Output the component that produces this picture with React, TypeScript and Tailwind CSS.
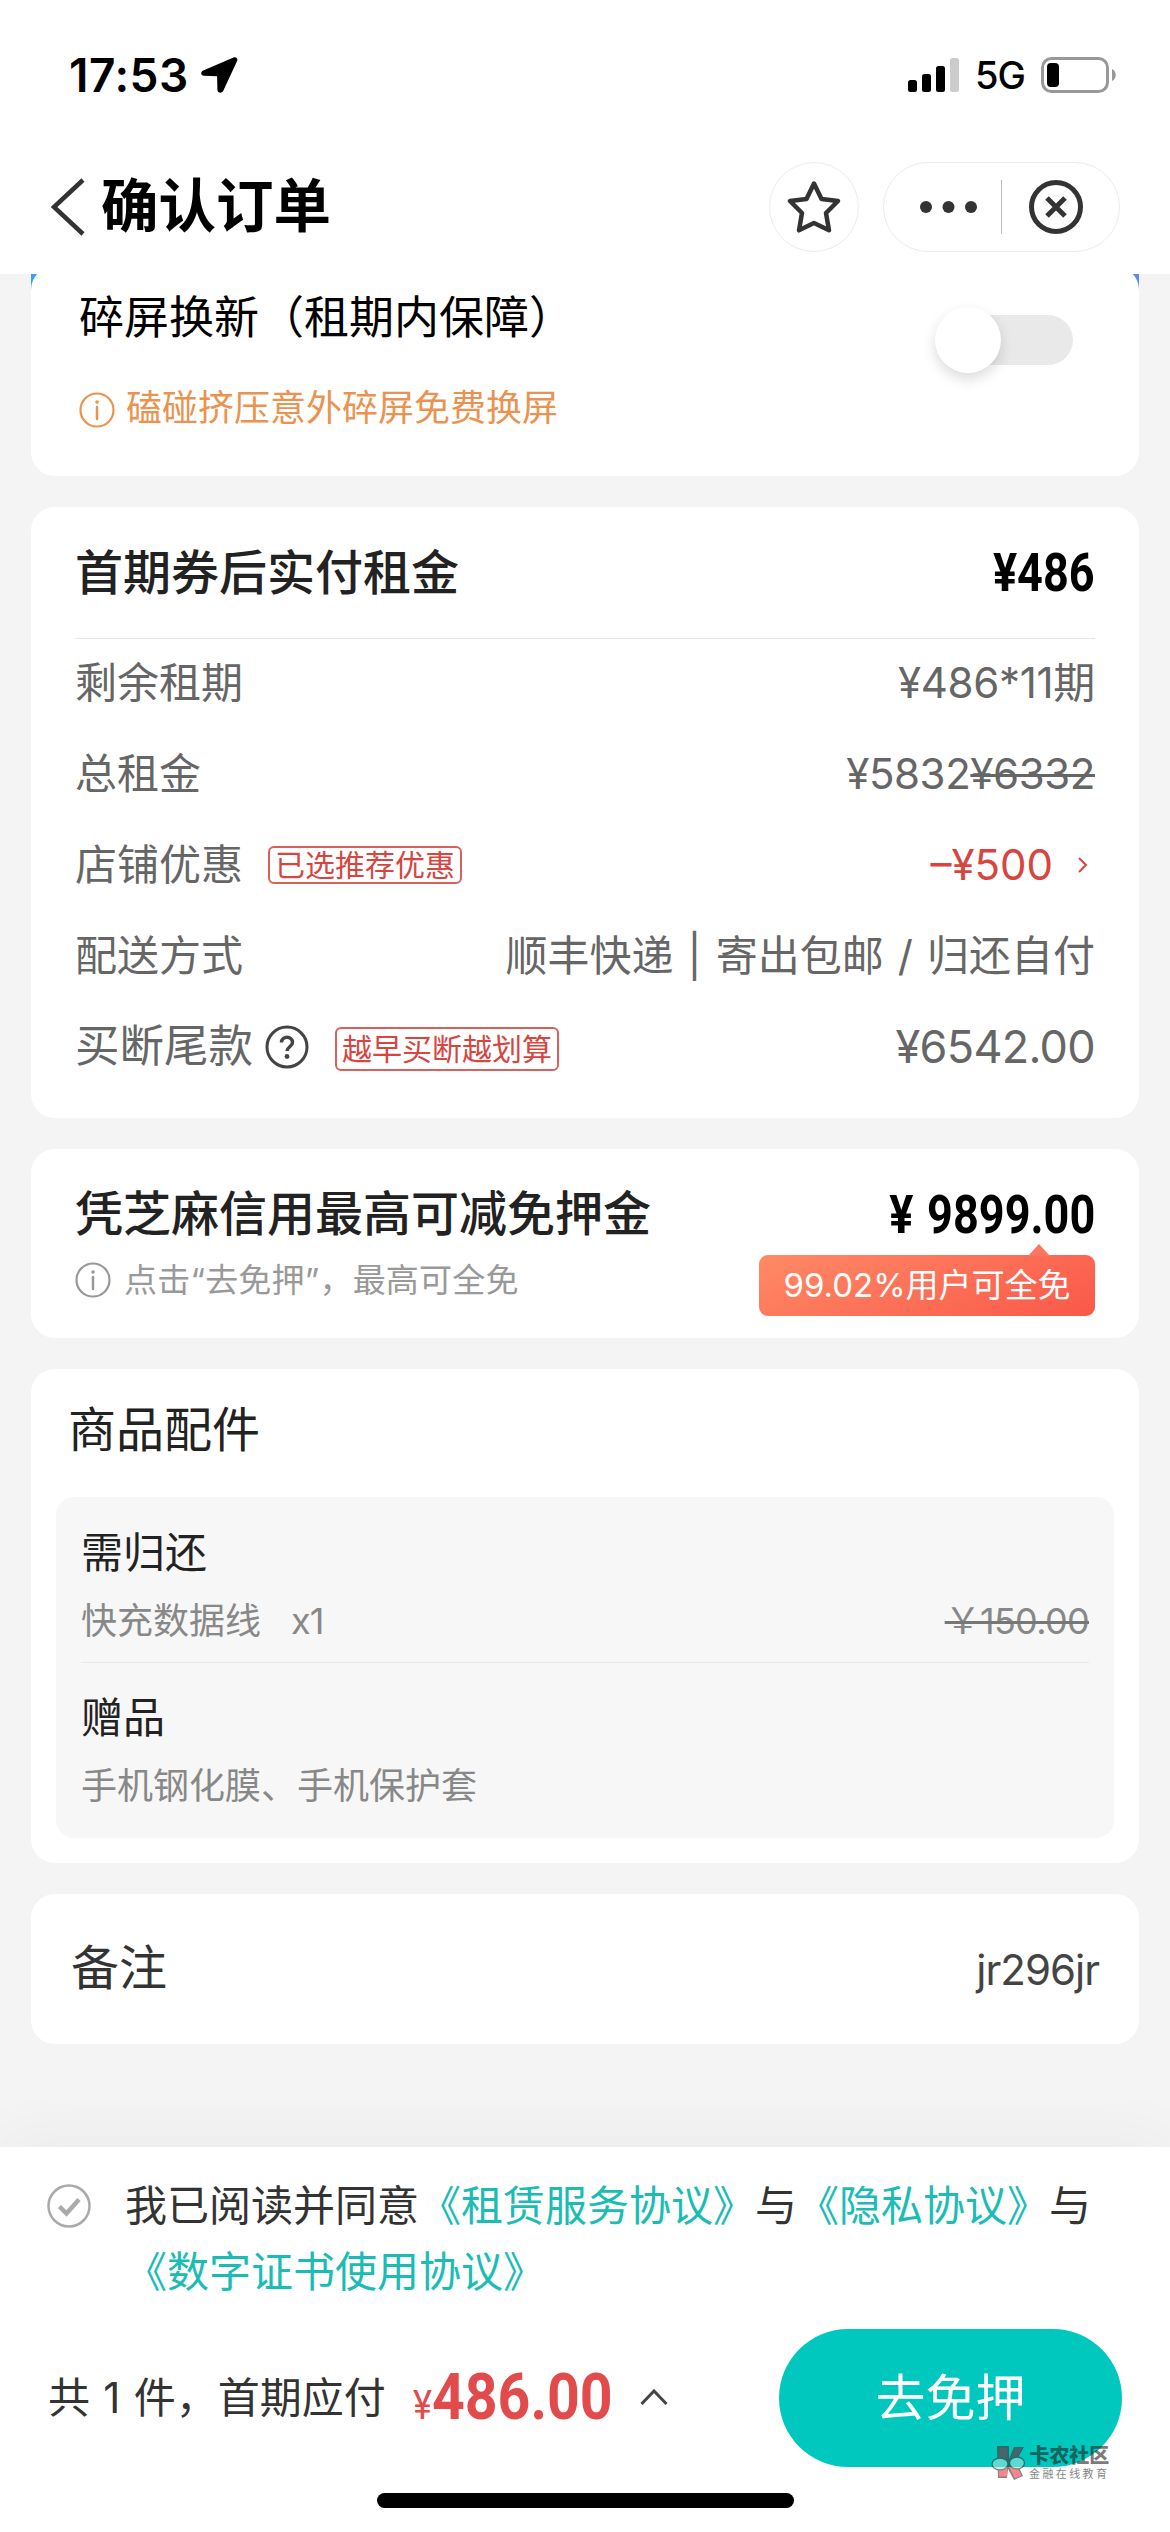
import React, { useState } from 'react';

interface InfoRowProps {
  label: React.ReactNode;
  children: React.ReactNode;
}

const StatusBar = () => (
  <div className="flex h-[150px] items-center justify-between pl-[69px] pr-[53px]">
    <div className="flex items-center">
      <span className="w-[132px] text-[46px] font-semibold leading-none tracking-[0.500px] text-black">17:53</span>
      <svg className="h-[36px] w-[37px]" viewBox="0 0 37 36" fill="#000">
        <path d="M32.500.6 2.200 13.600C-.8 14.900-.3 18.700 2.900 18.800l13.200.4.3 13.200c.1 4 4.600 4.300 6 1.200L36 4.200C37.200 1.600 35.200-.5 32.500.6Z" />
      </svg>
    </div>
    <div className="flex items-center">
      <svg className="h-[34px] w-[52px]" viewBox="0 0 52 34">
        <rect x="0" y="22" width="9" height="12" rx="2.500" />
        <rect x="14" y="16" width="9" height="18" rx="2.500" />
        <rect x="28" y="8" width="9" height="26" rx="2.500" />
        <rect x="42" y="0" width="9" height="34" rx="2.500" fill="#ccc" />
      </svg>
      <span className="ml-[15px] w-[66px] text-[38px] font-medium leading-none tracking-[-1px] text-black">5G</span>
      <svg className="h-9 w-[76px]" viewBox="0 0 76 36">
        <rect x="1.500" y="1.500" width="65" height="33" rx="9" fill="none" stroke="#999" strokeWidth="3" />
        <rect x="6" y="6" width="12" height="24" rx="4" />
        <path d="M71 12c5 2 5 10 0 12Z" fill="#999" />
      </svg>
    </div>
  </div>
);

const NavBar = () => (
  <div className="flex h-[124px] items-start justify-between pl-[50px] pr-[50px] pt-3">
    <div className="flex h-[90px] items-center">
      <svg className="h-[58px] w-[36px]" viewBox="0 0 36 58" fill="none" stroke="#333" strokeWidth="4.500">
        <path d="M33 2 4 29l29 27" />
      </svg>
      <h1 className="ml-[15px] text-[57.500px] font-bold leading-none text-black">确认订单</h1>
    </div>
    <div className="flex items-center gap-6">
      <button className="flex h-[90px] w-[90px] items-center justify-center rounded-full border border-[#ececec]">
        <svg className="h-[54px] w-[54px]" viewBox="0 0 54 54" fill="none" stroke="#333" strokeWidth="4.500" strokeLinejoin="round">
          <path d="m27 3.500 7.500 15.500L51 21 39 33l3 17.300L27 43l-15 7.300L15 33 3 21l16.500-2Z" />
        </svg>
      </button>
      <div className="flex h-[90px] w-[237px] items-center rounded-full border border-[#ececec] pl-[36px]">
        <svg className="h-3 w-[58px]" viewBox="0 0 58 12" fill="#333">
          <circle cx="6" cy="6" r="6" />
          <circle cx="28.500" cy="6" r="6" />
          <circle cx="51" cy="6" r="6" />
        </svg>
        <div className="ml-[23px] h-[54px] w-px bg-[#bbb]" />
        <svg className="ml-[27px] h-[54px] w-[54px]" viewBox="0 0 54 54" fill="none" stroke="#333" strokeWidth="5">
          <circle cx="27" cy="27" r="24.500" />
          <path d="m18 18 18 18M36 18 18 36" />
        </svg>
      </div>
    </div>
  </div>
);

const InfoIcon = () => (
  <svg className="h-[36px] w-[36px] shrink-0" viewBox="0 0 36 36" fill="none" stroke="currentColor" strokeWidth="2.200">
    <circle cx="18" cy="18" r="16.500" />
    <path d="M18 15v12" strokeWidth="2.500" strokeLinecap="round" />
    <circle cx="18" cy="10" r="1.800" fill="currentColor" stroke="none" />
  </svg>
);

const InfoRow = ({ label, children }: InfoRowProps) => (
  <div className="flex h-[91px] items-center justify-between">
    <div className="flex items-center">{label}</div>
    <div className="flex items-center">{children}</div>
  </div>
);

const Watermark = () => (
  <div className="absolute bottom-[-14px] right-[13px] flex w-[118px] items-center opacity-60">
    <svg className="h-9 w-[36px] shrink-0" viewBox="0 0 36 36">
      <path d="M6 1h12v13L23 2h10l-8 14 7 15-9 4-6-11-1 9H7Z" fill="#333" />
      <path d="M7.500 2.500h9v11h-9ZM24 3h7l-6 11h-6Z" fill="#7a2530" />
      <path d="M8 21h8v10.500H8ZM18 22h8l4.500 8.500-6.500 3Z" fill="#fb3346" />
      <ellipse cx="9" cy="19" rx="8" ry="6" fill="#9fe3df" stroke="#333" strokeWidth="1.300" />
      <ellipse cx="26" cy="18" rx="7.500" ry="6" fill="#9fe3df" stroke="#333" strokeWidth="1.300" />
    </svg>
    <div className="ml-0.5 flex flex-col gap-[2px] whitespace-nowrap">
      <span className="text-[20px] font-black leading-[20px] text-[#222]">卡农社区</span>
      <span className="text-[11px] leading-[12px] tracking-[2.400px] text-[#333]">金融在线教育</span>
    </div>
  </div>
);

export default function App() {
  const [insured, setInsured] = useState(false);

  return (
    <div className="flex h-[2532px] w-[1170px] flex-col overflow-hidden bg-[#f4f4f4] font-['Inter','Noto_Sans_CJK_SC',sans-serif]">
      <header className="shrink-0 bg-white">
        <StatusBar />
        <NavBar />
      </header>

      <main className="flex flex-1 flex-col gap-[31px] overflow-hidden px-[31px]">
        {/* screen insurance */}
        <section className="h-[202px] shrink-0 rounded-b-[24px] bg-[linear-gradient(90deg,#36a3f0,#5b8af2)] bg-[length:100%_16px] bg-no-repeat">
          <div className="-mt-2 flex h-[210px] justify-between rounded-[24px] bg-white pl-[48px] pr-[66px]">
            <div>
              <h2 className="mt-[21px] text-[45px] leading-[62px] text-black">碎屏换新（租期内保障）</h2>
              <div className="mt-[33px] flex items-center gap-[11px] text-[#ea9350]">
                <span className="pt-1"><InfoIcon /></span>
                <p className="text-[36px] leading-[52px]">磕碰挤压意外碎屏免费换屏</p>
              </div>
            </div>
            <button
              onClick={() => setInsured(!insured)}
              className={`mt-[49px] flex h-[50px] w-[132px] items-center rounded-full ${insured ? 'justify-end bg-[#00c8be]' : 'bg-[#e9e9e9]'}`}
            >
              <span className="-ml-1.5 h-[66px] w-[66px] shrink-0 rounded-full bg-white shadow-[0_6px_14px_rgba(0,0,0,0.14)]" />
            </button>
          </div>
        </section>

        {/* rent */}
        <section className="h-[611px] shrink-0 rounded-[24px] bg-white px-[44px] text-[42px] text-[#666]">
          <div className="flex h-[132px] items-center justify-between border-b border-[#e8e8e8]">
            <h2 className="text-[48px] font-medium text-[#222]">首期券后实付租金</h2>
            <span className="origin-right scale-x-[0.85] pt-[2px] font-['Roboto'] text-[53px] font-bold leading-none text-black">¥486</span>
          </div>
          <div className="-mt-[2px]">
            <InfoRow label="剩余租期">
              <span className="tracking-[-0.300px]">¥486*11期</span>
            </InfoRow>
            <InfoRow label="总租金">
              <span className="tracking-[-0.400px]">¥5832<s className="decoration-[3px]">¥6332</s></span>
            </InfoRow>
            <InfoRow
              label={
                <>
                  店铺优惠
                  <span className="ml-[25px] flex h-[38px] items-center rounded-md border-2 border-[#d9605b] px-[5px] text-[30px] leading-none text-[#d8453f]">已选推荐优惠</span>
                </>
              }
            >
              <span className="text-[#d8453f]">–¥500</span>
              <svg className="ml-[25px] mr-[7px] h-4 w-[10px]" viewBox="0 0 10 16" fill="none" stroke="#d8453f" strokeWidth="2">
                <path d="m1 1 7 7-7 7" />
              </svg>
            </InfoRow>
            <InfoRow label="配送方式">
              <span className="[word-spacing:2.300px]">顺丰快递 | 寄出包邮 / 归还自付</span>
            </InfoRow>
            <InfoRow
              label={
                <>
                  <span className="text-[44.500px]">买断尾款</span>
                  <svg className="ml-[12px] h-11 w-11" viewBox="0 0 44 44" fill="none" stroke="#444" strokeWidth="3">
                    <circle cx="22" cy="22" r="20" />
                    <path d="M16.500 17.500c0-7 11-7 11 0 0 4-5.500 4.500-5.500 8.500" strokeWidth="3.500" />
                    <circle cx="22" cy="31.500" r="2.400" fill="#444" stroke="none" />
                  </svg>
                  <span className="ml-[26px] mt-1 flex h-[44px] items-center rounded-md border-2 border-[#d9605b] px-[5px] text-[30px] leading-none text-[#d8453f]">越早买断越划算</span>
                </>
              }
            >
              <span className="text-[45px] tracking-[-0.700px]">¥6542.00</span>
            </InfoRow>
          </div>
        </section>

        {/* deposit */}
        <section className="h-[189px] shrink-0 rounded-[24px] bg-white px-[44px] pt-[33px]">
          <div className="flex h-[64px] items-center justify-between">
            <h2 className="text-[48px] font-medium text-[#222]">凭芝麻信用最高可减免押金</h2>
            <span className="flex origin-right scale-x-[0.85] items-center pt-[2px] font-['Roboto','Noto_Sans_CJK_SC'] text-[53px] font-bold leading-none text-black">
              ¥<span className="ml-4">9899.00</span>
            </span>
          </div>
          <div className="flex justify-between">
            <div className="flex h-[68px] items-center gap-[13px] text-[#999]">
              <InfoIcon />
              <p className="pt-px text-[33px] tracking-[0.200px]">点击“去免押”，最高可全免</p>
            </div>
            <div className="relative mt-[9px] flex h-[61px] w-[336px] items-center justify-center rounded-[9px] bg-[linear-gradient(155deg,#ff8a66,#fa5849)] text-[33px] text-white">
              99.02%用户可全免
              <svg className="absolute right-[45px] top-[-11px] h-3 w-[22px]" viewBox="0 0 22 12" fill="#fc7560">
                <path d="M11 0 22 12H0Z" />
              </svg>
            </div>
          </div>
        </section>

        {/* accessories */}
        <section className="h-[494px] shrink-0 rounded-[24px] bg-white px-[25px]">
          <h2 className="pl-[12px] pt-[29px] text-[48px] leading-[64px] text-[#222]">商品配件</h2>
          <div className="mt-[35px] h-[341px] rounded-[18px] bg-[#f7f7f7] px-[25px] pt-[24px] text-[36px] text-[#888]">
            <h3 className="text-[42px] leading-[64px] text-[#222]">需归还</h3>
            <div className="flex h-[78px] items-start justify-between border-b border-[#e8e8e8] pt-[10px] leading-[52px]">
              <span>快充数据线<span className="ml-[30px] tracking-[-1px]">x1</span></span>
              <s className="tracking-[-0.700px] decoration-[#777] decoration-[3px]">￥150.00</s>
            </div>
            <h3 className="mt-[23px] text-[42px] leading-[64px] text-[#222]">赠品</h3>
            <p className="mt-[10px] leading-[52px]">手机钢化膜、手机保护套</p>
          </div>
        </section>

        {/* remark */}
        <section className="flex h-[150px] shrink-0 items-center justify-between rounded-[24px] bg-white px-[40px]">
          <h2 className="pb-[3px] text-[48px] text-[#333]">备注</h2>
          <span className="pt-px text-[42px] tracking-[-1px] text-[#444]">jr296jr</span>
        </section>
      </main>

      <footer className="flex h-[385px] shrink-0 flex-col bg-white shadow-[0_-10px_60px_rgba(20,20,60,0.04)]">
        <div className="flex px-[47px] pt-[26px]">
          <svg className="mt-[11px] h-11 w-11 shrink-0" viewBox="0 0 44 44" fill="none" stroke="#aaa" strokeWidth="2.500">
            <circle cx="22" cy="22" r="20.500" />
            <path d="m12.500 22.500 7 7 12.500-14" strokeWidth="4.500" />
          </svg>
          <p className="ml-[34px] text-[42px] leading-[66px] text-[#333]">
            我已阅读并同意<span className="text-[#1bbcb4]">《租赁服务协议》</span>与<span className="text-[#1bbcb4]">《隐私协议》</span>与
            <br />
            <span className="text-[#1bbcb4]">《数字证书使用协议》</span>
          </p>
        </div>
        <div className="mt-6 flex h-[138px] items-center justify-between pl-[48px] pr-[48px]">
          <div className="flex items-center pb-[2px]">
            <span className="text-[42px] text-[#333] [word-spacing:1.500px]">共 1 件，首期应付</span>
            <span className="ml-[27px] flex w-[196px] origin-left scale-x-[0.880] items-baseline whitespace-nowrap font-['Roboto'] leading-none text-[#e24b4b]">
              <span className="text-[41px]">¥</span>
              <span className="text-[65px] font-bold">486.00</span>
            </span>
            <svg className="ml-[31px] h-4 w-[28px]" viewBox="0 0 28 16" fill="none" stroke="#444" strokeWidth="3">
              <path d="M1.500 15 14 2l12.500 13" />
            </svg>
          </div>
          <button className="relative h-[138px] w-[343px] rounded-full bg-[#00c8be] text-[50px] text-white">
            去免押
            <Watermark />
          </button>
        </div>
        <div className="mx-auto mt-[26px] h-[15px] w-[417px] rounded-full bg-black" />
      </footer>
    </div>
  );
}
